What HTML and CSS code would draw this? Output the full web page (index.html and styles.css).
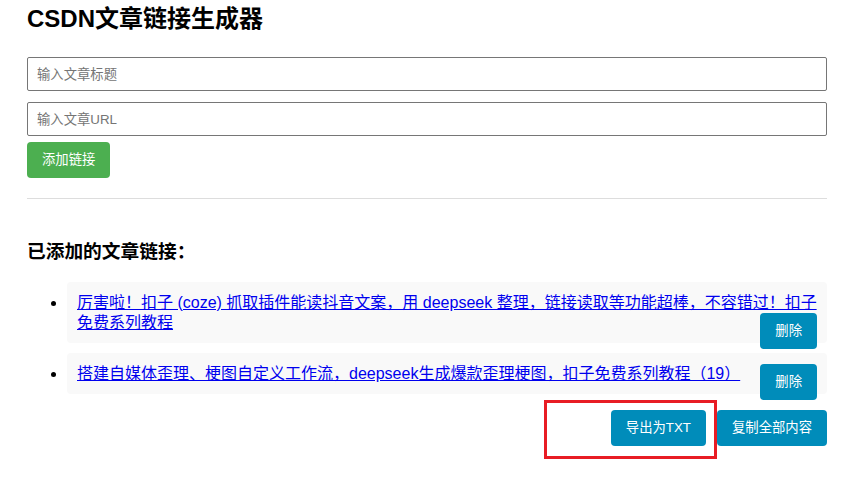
FILE: index.html
```html
<!DOCTYPE html>
<html lang="zh-CN">
<head>
<meta charset="utf-8">
<title>CSDN文章链接生成器</title>
<link rel="stylesheet" href="styles.css">
</head>
<body>
<div class="container">
  <h1 class="title">CSDN文章链接生成器</h1>
  <input class="field field-first" type="text" placeholder="输入文章标题">
  <input class="field" type="text" placeholder="输入文章URL">
  <button class="btn btn-green">添加链接</button>
  <hr class="divider">
  <h3 class="subtitle">已添加的文章链接：</h3>
  <ul class="links">
    <li class="link-item"><a class="link" href="#">厉害啦！扣子 (coze) 抓取插件能读抖音文案，用 deepseek 整理，链接读取等功能超棒，不容错过！扣子免费系列教程</a><button class="btn btn-blue btn-del">删除</button></li>
    <li class="link-item"><a class="link" href="#">搭建自媒体歪理、梗图自定义工作流，deepseek生成爆款歪理梗图，扣子免费系列教程（19）</a><button class="btn btn-blue btn-del">删除</button></li>
  </ul>
  <div class="actions">
    <button class="btn btn-blue">导出为TXT</button>
    <button class="btn btn-blue">复制全部内容</button>
  </div>
</div>
<div class="highlight"></div>
</body>
</html>
```
FILE: styles.css
```css
html, body {
  margin: 0;
  padding: 0;
  background: #fff;
}
body {
  font-family: "Liberation Sans", Arial, "Noto Sans CJK SC", sans-serif;
  color: #000;
}
.container {
  width: 800px;
  margin-left: 27px;
  padding-top: 3px;
}
.title {
  font-size: 24px;
  font-weight: bold;
  line-height: 32px;
  margin: 0 0 22px;
}
.field {
  display: block;
  box-sizing: border-box;
  width: 800px;
  height: 34px;
  margin: 0 0 11px;
  padding: 0 9px;
  border: 1px solid #767676;
  border-radius: 2px;
  font-family: "Liberation Sans", Arial, "Noto Sans CJK SC", sans-serif;
  font-size: 13.33px;
  color: #000;
  outline: none;
}
.field::placeholder {
  color: #757575;
}
.field + .field {
  margin-bottom: 6px;
}
.btn {
  box-sizing: border-box;
  border: none;
  border-radius: 4px;
  padding: 10px 15px;
  height: 36px;
  font-family: "Liberation Sans", Arial, "Noto Sans CJK SC", sans-serif;
  font-size: 13.33px;
  line-height: 16px;
  color: #fff;
  cursor: pointer;
}
.btn-green {
  background: #4caf50;
  display: block;
}
.btn-blue {
  background: #008cba;
}
.divider {
  border: none;
  border-top: 1px solid #ddd;
  margin: 20px 0 0;
  height: 0;
}
.subtitle {
  font-size: 18.72px;
  font-weight: bold;
  line-height: 24px;
  margin: 41px 0 0;
}
.links {
  margin: 18px 0 16px;
  padding-left: 40px;
}
.link-item {
  background: #f9f9f9;
  border-radius: 4px;
  padding: 11px 4px 10px 10px;
  margin-bottom: 10px;
  font-size: 16px;
  line-height: 20px;
}
.link {
  color: #0000ee;
  text-decoration: underline;
}
.btn-del {
  float: right;
  margin-left: 10px;
  margin-right: 6px;
}
.actions {
  display: flex;
  justify-content: flex-end;
  gap: 11px;
}
.highlight {
  position: absolute;
  left: 544px;
  top: 400px;
  width: 167px;
  height: 53px;
  border: 3px solid #e81c24;
  pointer-events: none;
}
```
